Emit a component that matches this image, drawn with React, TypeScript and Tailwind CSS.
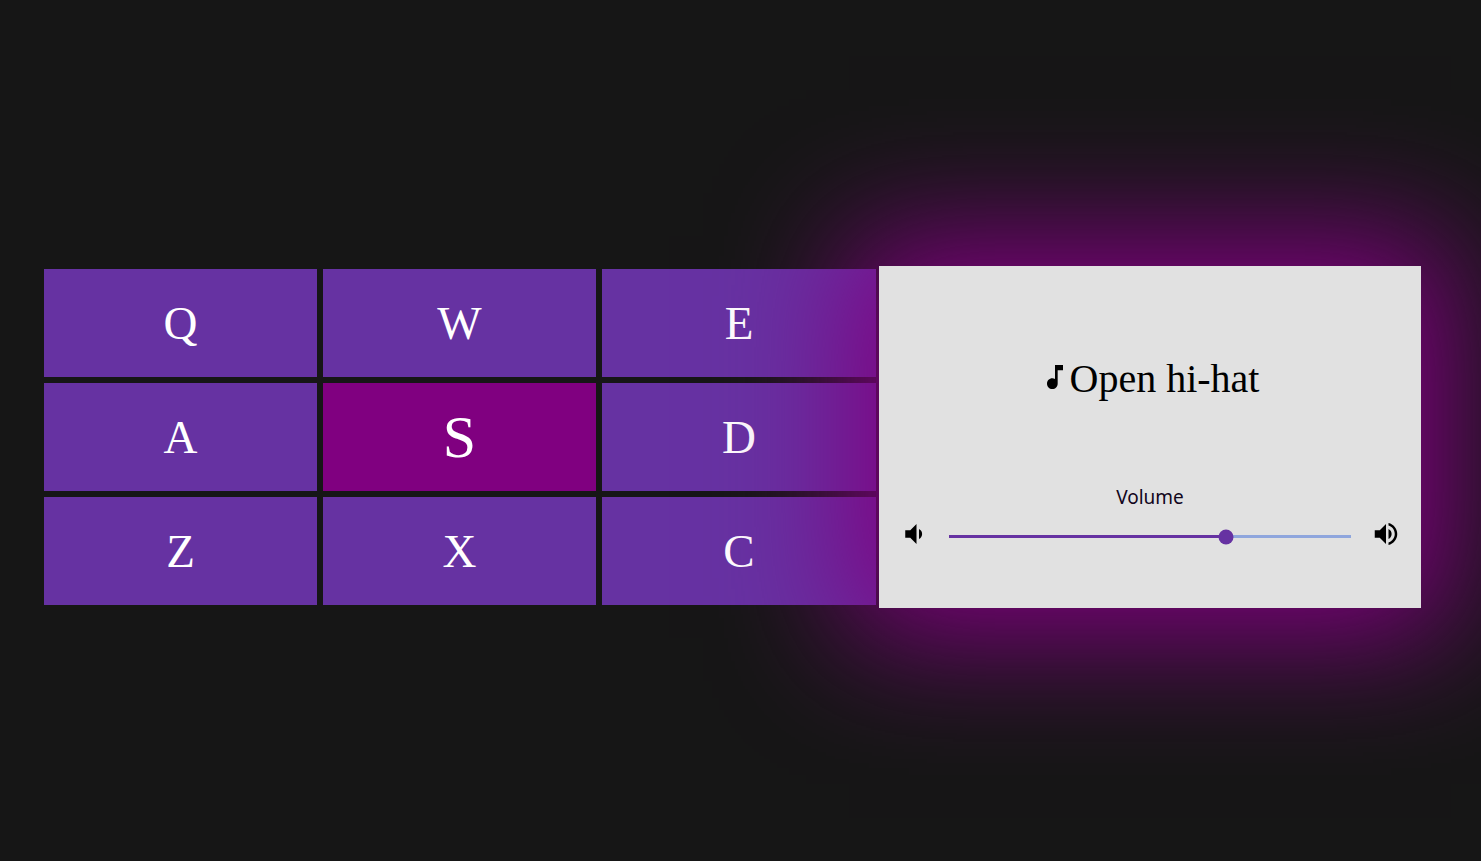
import { MdMusicNote, MdVolumeDown, MdVolumeUp } from "react-icons/md";

const pads = ["Q", "W", "E", "A", "S", "D", "Z", "X", "C"];

export default function App() {
  return (
    <div className="min-h-screen bg-[#161616] pl-[41px] pt-[266px] overflow-hidden">
      <div className="flex w-[1380px]">
        {/* Pads */}
        <div className="grid w-[838px] grid-cols-[273px_273px_274px] gap-[6px] p-[3px]">
          {pads.map((key) => (
            <div
              key={key}
              className={
                key === "S"
                  ? "flex h-[108px] items-center justify-center bg-[#800080] font-['Liberation_Serif',serif] text-[60px] text-white"
                  : "flex h-[108px] items-center justify-center bg-[#6632a2] font-['Liberation_Serif',serif] text-[47px] text-white"
              }
            >
              {key}
            </div>
          ))}
        </div>

        {/* Display */}
        <div className="relative z-10 flex h-[342px] w-[542px] flex-col bg-[#e1e1e1] shadow-[0_0_120px_30px_#800080]">
          <div className="flex items-center justify-center pr-[2px] pt-[88px] font-['Liberation_Serif',serif] text-[40px] leading-[50px] text-black">
            <MdMusicNote className="-mt-[4px] -mr-[1px] h-[32px] w-[32px]" />
            <span>Open hi-hat</span>
          </div>

          <div className="mt-[81px] text-center font-['Noto_Sans',sans-serif] text-[19px] leading-[25px] text-[#12061c]">
            Volume
          </div>

          <div className="mt-[9px] flex items-center px-[20px]">
            <MdVolumeDown className="h-[30px] w-[30px] text-black" />
            <div className="relative mx-[20px] mt-[5px] h-[3px] flex-1 bg-[#8fa6dd]">
              <div className="h-full w-[69%] bg-[#6632a2]" />
              <div className="absolute left-[69%] top-1/2 h-[15px] w-[15px] -translate-x-1/2 -translate-y-1/2 rounded-full bg-[#6632a2]" />
            </div>
            <MdVolumeUp className="h-[30px] w-[30px] text-black" />
          </div>
        </div>
      </div>
    </div>
  );
}
